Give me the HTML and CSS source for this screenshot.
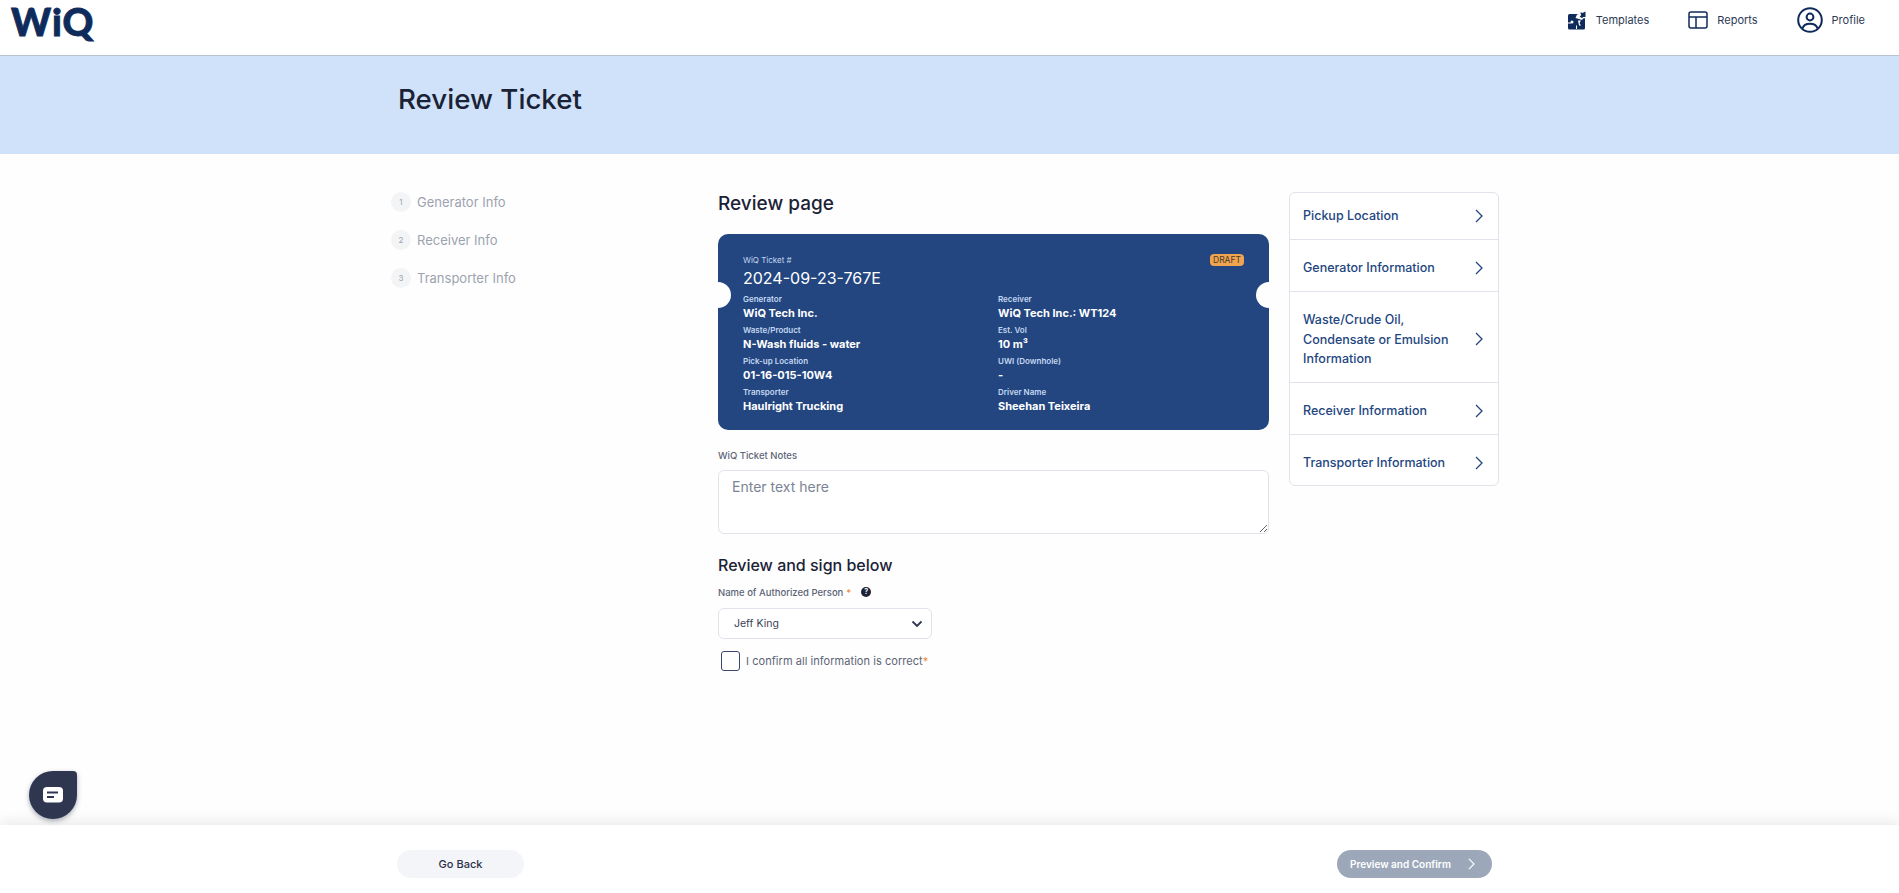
FILE: index.html
```html
<!DOCTYPE html>
<html lang="en">
<head>
  <meta charset="UTF-8">
  <meta name="viewport" content="width=device-width, initial-scale=1.0">
  <title>Review Ticket</title>
  <link rel="stylesheet" href="styles.css">
</head>
<body>
  <div class="nav">
    <div class="logo">WiQ</div>
    <div class="nav-links">
      <a class="nav-link">
        <svg class="nav-icon" viewBox="0 0 20 20">
          <rect x="1" y="4" width="17" height="15.500" rx="1.500" fill="#0f2b5b"/>
          <circle cx="5" cy="12" r="1.500" fill="#fff"/>
          <path d="M9.500 15.500V19M1 13h3" stroke="#fff" stroke-width="1"/>
          <path d="M11 10.500h3l-1.500 2.500 1.500 2.500h-2z" fill="#fff"/>
          <path d="M8.500 8 10 4.500l2-.5L12 1.500 19 1v7l-3 .5-1 1.500-3-1z" fill="#fff"/>
          <path d="M12.500 3 14.500 2.500a1.500 1.500 0 0 0 2 0L18.500 1.500V7h-2.300a1.500 1.500 0 0 1-2.700 0L12.500 7.500l.8-1.500a1.600 1.600 0 0 0-.8-3z" fill="#0f2b5b"/>
        </svg>
        <span>Templates</span>
      </a>
      <a class="nav-link">
        <svg class="nav-icon" viewBox="0 0 20 20" fill="none" stroke="#0f2b5b" stroke-width="1.500"><rect x="1" y="2" width="18" height="16" rx="2"/><path d="M1 7h18M8 7v11"/></svg>
        <span>Reports</span>
      </a>
      <a class="nav-link">
        <svg class="nav-icon-lg" viewBox="0 0 26 26" fill="none" stroke="#0f2b5b" stroke-width="2"><circle cx="13" cy="13" r="11.800"/><circle cx="13" cy="10" r="3.400"/><path d="M5.500 21.500c1-3.400 4-4.700 7.500-4.700s6.500 1.300 7.500 4.700"/></svg>
        <span>Profile</span>
      </a>
    </div>
  </div>

  <div class="banner">
    <h1>Review Ticket</h1>
  </div>

  <div class="content">
    <div class="steps">
      <div class="step"><span class="step-num">1</span>Generator Info</div>
      <div class="step"><span class="step-num">2</span>Receiver Info</div>
      <div class="step"><span class="step-num">3</span>Transporter Info</div>
    </div>

    <div class="review">
      <h2>Review page</h2>

      <div class="ticket">
        <div class="ticket-top">
          <div>
            <div class="ticket-label">WiQ Ticket #</div>
            <div class="ticket-number">2024-09-23-767E</div>
          </div>
          <span class="draft">DRAFT</span>
        </div>
        <div class="ticket-grid">
          <div><div class="field-label">Generator</div><div class="field-value">WiQ Tech Inc.</div></div>
          <div><div class="field-label">Receiver</div><div class="field-value">WiQ Tech Inc.: WT124</div></div>
          <div><div class="field-label">Waste/Product</div><div class="field-value">N-Wash fluids - water</div></div>
          <div><div class="field-label">Est. Vol</div><div class="field-value">10 m³</div></div>
          <div><div class="field-label">Pick-up Location</div><div class="field-value">01-16-015-10W4</div></div>
          <div><div class="field-label">UWI (Downhole)</div><div class="field-value">-</div></div>
          <div><div class="field-label">Transporter</div><div class="field-value">Haulright Trucking</div></div>
          <div><div class="field-label">Driver Name</div><div class="field-value">Sheehan Teixeira</div></div>
        </div>
      </div>

      <label class="form-label notes-label">WiQ Ticket Notes</label>
      <textarea class="notes" placeholder="Enter text here"></textarea>

      <h3>Review and sign below</h3>
      <div class="form-label person-label">
        Name of Authorized Person <span class="req">*</span>
        <span class="help">?</span>
      </div>
      <div class="select">
        <span>Jeff King</span>
        <svg width="12" height="8" viewBox="0 0 12 8" fill="none" stroke="#2f3750" stroke-width="1.800"><path d="M1.500 1.500 6 6l4.500-4.500"/></svg>
      </div>
      <div class="confirm">
        <span class="checkbox"></span>
        <span>I confirm all information is correct<span class="req">*</span></span>
      </div>
    </div>

    <div class="sections">
      <div class="section-row"><span>Pickup Location</span><svg class="chev" viewBox="0 0 8 14"><path d="M1 1l6 6-6 6"/></svg></div>
      <div class="section-row"><span>Generator Information</span><svg class="chev" viewBox="0 0 8 14"><path d="M1 1l6 6-6 6"/></svg></div>
      <div class="section-row"><span>Waste/Crude Oil, Condensate or Emulsion Information</span><svg class="chev" viewBox="0 0 8 14"><path d="M1 1l6 6-6 6"/></svg></div>
      <div class="section-row"><span>Receiver Information</span><svg class="chev" viewBox="0 0 8 14"><path d="M1 1l6 6-6 6"/></svg></div>
      <div class="section-row"><span>Transporter Information</span><svg class="chev" viewBox="0 0 8 14"><path d="M1 1l6 6-6 6"/></svg></div>
    </div>
  </div>

  <div class="footer">
    <button class="btn-back">Go Back</button>
    <button class="btn-next">Preview and Confirm
      <svg class="chev-white" viewBox="0 0 8 14"><path d="M1 1l6 6-6 6"/></svg>
    </button>
  </div>

  <div class="chat">
    <svg width="20" height="16" viewBox="0 0 20 16"><rect width="20" height="15.500" rx="4" fill="#fff"/><path d="M4 5.500h11M4 10h7" stroke="#2f3750" stroke-width="1.800"/></svg>
  </div>
</body>
</html>
```

FILE: styles.css
```css
* {
  box-sizing: border-box;
}

html, body {
  height: 100%;
}

body {
  margin: 0;
  font-family: Inter, "Liberation Sans", sans-serif;
  background-color: #fefefe;
  display: flex;
  flex-direction: column;
  overflow: hidden;
  color: #1b2236;
}

.nav {
  height: 56px;
  flex-shrink: 0;
  background: #fff;
  border-bottom: 1px solid #b8c2cf;
  display: flex;
  justify-content: space-between;
  padding: 0 34px 15px 11px;
}

.logo {
  font-family: Lato, Inter, sans-serif;
  font-size: 38px;
  font-weight: 900;
  line-height: 40px;
  letter-spacing: 1px;
  -webkit-text-stroke: 0.800px #0f2b5b;
  color: #0f2b5b;
  padding-top: 1px;
}

.nav-links {
  display: flex;
  align-items: center;
  gap: 39px;
}

.nav-link {
  display: flex;
  align-items: center;
  gap: 9px;
  font-size: 11px;
  color: #2b3a55;
}

.nav-icon {
  width: 20px;
  height: 20px;
}

.nav-icon-lg {
  width: 26px;
  height: 26px;
}

.banner {
  height: 98px;
  flex-shrink: 0;
  background-color: #cfe2f9;
  padding: 26px 0 0 398px;
}

.banner h1 {
  margin: 0;
  font-size: 27.700px;
  line-height: 34px;
  font-weight: 500;
  color: #1b2236;
}

.content {
  flex: 1;
  display: flex;
  padding: 38px 0 0 391px;
}

.steps {
  width: 327px;
  flex-shrink: 0;
  display: flex;
  flex-direction: column;
  gap: 18px;
}

.step {
  display: flex;
  align-items: center;
  gap: 6px;
  height: 20px;
  font-size: 13px;
  color: #9ca3af;
}

.step-num {
  width: 20px;
  height: 20px;
  border-radius: 50%;
  background-color: #f3f4f6;
  font-size: 8px;
  display: flex;
  align-items: center;
  justify-content: center;
}

.review {
  width: 551px;
  flex-shrink: 0;
}

.review h2 {
  margin: 0 0 18px;
  font-size: 19px;
  line-height: 26px;
  font-weight: 500;
  position: relative;
  top: -1px;
}

.ticket {
  position: relative;
  height: 196px;
  margin-top: -2px;
  background-color: #234680;
  border-radius: 10px;
  padding: 20px 25px 0;
  color: #fff;
}

.ticket::before,
.ticket::after {
  content: "";
  position: absolute;
  top: 48px;
  width: 26px;
  height: 26px;
  border-radius: 50%;
  background-color: #fefefe;
}

.ticket::before {
  left: -13px;
}

.ticket::after {
  right: -13px;
}

.ticket-top {
  display: flex;
  justify-content: space-between;
  align-items: flex-start;
}

.ticket-label {
  font-size: 8px;
  line-height: 12px;
  color: #c4d8f2;
}

.ticket-number {
  font-size: 16px;
  line-height: 24px;
}

.draft {
  width: 34px;
  height: 12px;
  border-radius: 4px;
  background-color: #f0a44f;
  color: #4a3a2a;
  font-size: 8.500px;
  line-height: 12px;
  text-align: center;
}

.ticket-grid {
  display: grid;
  grid-template-columns: 255px 1fr;
  row-gap: 3px;
  margin-top: 3px;
}

.field-label {
  font-size: 8px;
  line-height: 12px;
  font-weight: 600;
  color: #c4d8f2;
}

.field-value {
  font-size: 11px;
  line-height: 16px;
  font-weight: 700;
}

.form-label {
  font-size: 9.500px;
  line-height: 14px;
  font-weight: 500;
  color: #5c6477;
}

.notes-label {
  display: block;
  margin-top: 19px;
}

.notes {
  display: block;
  width: 551px;
  height: 64px;
  margin-top: 7px;
  padding: 7px 13px;
  border: 1px solid #e1e3ea;
  border-radius: 6px;
  background: #fff;
  font-family: inherit;
  font-size: 14px;
  line-height: 18px;
}

.notes::placeholder {
  color: #7b8494;
}

.review h3 {
  margin: 21px 0 0;
  font-size: 16px;
  line-height: 20px;
  font-weight: 500;
}

.person-label {
  margin-top: 11px;
  display: flex;
  align-items: center;
  gap: 3px;
}

.req {
  color: #ee8a3c;
}

.help {
  width: 10px;
  height: 10px;
  margin-left: 7px;
  margin-top: -3px;
  border-radius: 50%;
  background-color: #1b2236;
  color: #fff;
  font-size: 7px;
  font-weight: 700;
  line-height: 10px;
  text-align: center;
}

.select {
  width: 214px;
  height: 31px;
  margin-top: 8px;
  padding: 0 8px 0 15px;
  border: 1px solid #e1e3ea;
  border-radius: 6px;
  background: #fff;
  display: flex;
  align-items: center;
  justify-content: space-between;
  font-size: 10.500px;
  color: #3a4156;
}

.confirm {
  display: flex;
  align-items: center;
  gap: 6px;
  margin: 12px 0 0 3px;
  font-size: 11px;
  letter-spacing: 0.050px;
  color: #5c6477;
}

.checkbox {
  width: 19px;
  height: 20px;
  border: 1px solid #3c4668;
  border-radius: 3px;
  background: #fff;
}

.sections {
  width: 210px;
  height: fit-content;
  margin-left: 20px;
  border: 1px solid #e1e3ea;
  border-radius: 6px;
  background: #fff;
}

.section-row {
  display: flex;
  align-items: center;
  justify-content: space-between;
  gap: 12px;
  padding: 18.500px 15px 13px 13px;
  font-size: 12.500px;
  line-height: 19.500px;
  font-weight: 500;
  color: #234680;
  border-bottom: 1px solid #e1e3ea;
}

.section-row:first-child {
  padding-top: 13px;
  padding-bottom: 13px;
}

.section-row:last-child {
  padding-bottom: 12px;
  border-bottom: none;
}

.chev {
  width: 8px;
  height: 14px;
  flex-shrink: 0;
  fill: none;
  stroke: #234680;
  stroke-width: 1.300;
}

.footer {
  height: 68px;
  flex-shrink: 0;
  background: #fff;
  box-shadow: 0 -4px 12px rgba(0, 0, 0, 0.08);
  display: flex;
  justify-content: space-between;
  align-items: flex-start;
  padding: 25px 407px 0 397px;
}

.footer button {
  height: 28px;
  border: none;
  border-radius: 14px;
  font-family: inherit;
  font-size: 11px;
  font-weight: 500;
}

.btn-back {
  width: 127px;
  background-color: #f4f5f8;
  color: #2b3148;
}

.footer .btn-next {
  width: 155px;
  padding: 0 0 0 13px;
  background-color: #9ca8ba;
  color: #fff;
  font-size: 10px;
  font-weight: 600;
  display: flex;
  align-items: center;
  gap: 17px;
}

.chev-white {
  width: 7px;
  height: 12px;
  fill: none;
  stroke: #fff;
  stroke-width: 1.300;
}

.chat {
  position: fixed;
  left: 29px;
  top: 771px;
  width: 48px;
  height: 48px;
  border-radius: 24px 4px 24px 24px;
  background-color: #2f3750;
  box-shadow: 0 2px 5px rgba(47, 55, 80, 0.4);
  display: flex;
  align-items: center;
  justify-content: center;
}
```
